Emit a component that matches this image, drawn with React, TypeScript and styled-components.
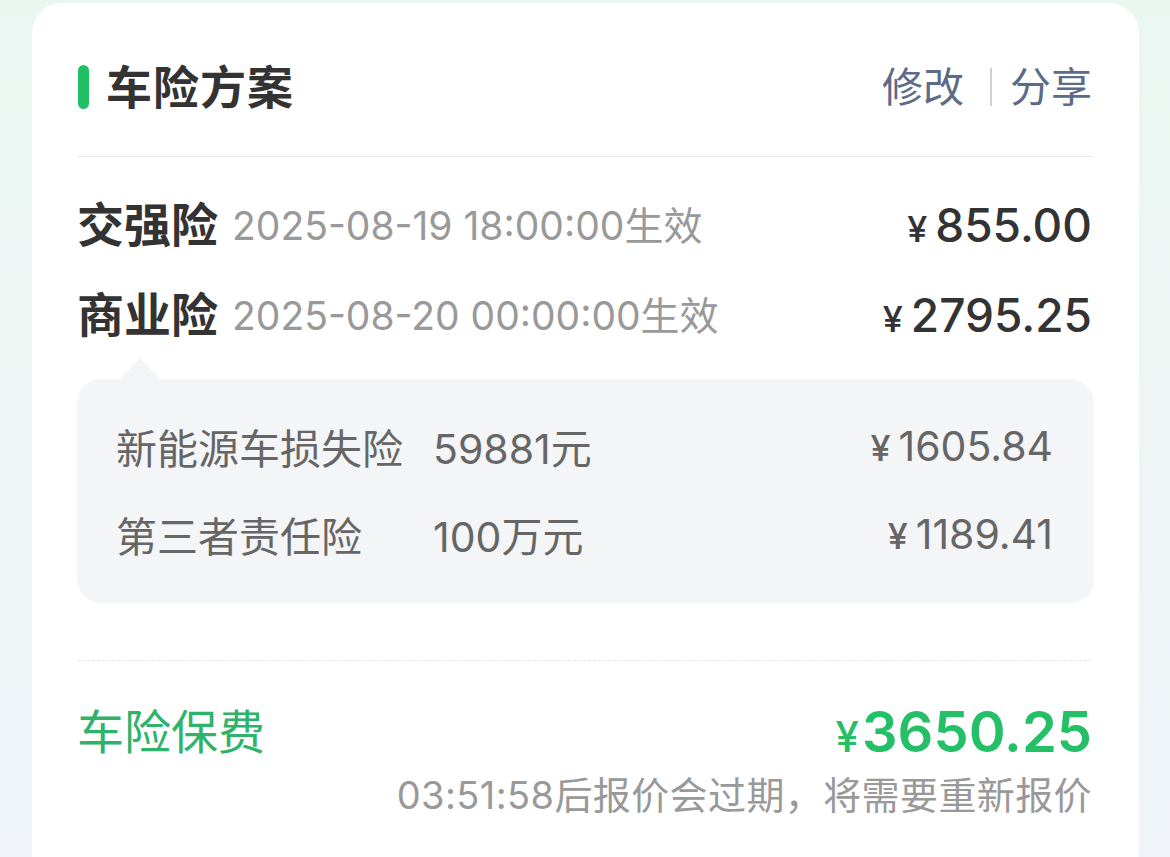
import React from "react";
import styled, { createGlobalStyle } from "styled-components";

const GlobalStyle = createGlobalStyle`
  html, body { margin: 0; padding: 0; }
  body {
    font-family: Inter, "Noto Sans CJK SC", sans-serif;
    background: linear-gradient(180deg, #eaf7f1 0%, #eef5f4 45%, #f0f4fa 100%);
    overflow: hidden;
  }
`;

const Page = styled.div`
  padding: 3px 31px 0 32px;
  height: 857px;
  box-sizing: border-box;
  overflow: hidden;
`;

const Card = styled.div`
  background: #ffffff;
  border-radius: 30px;
  padding: 0 45px 0 45px;
  height: 880px;
  box-sizing: border-box;
`;

const Header = styled.div`
  display: flex;
  align-items: center;
  justify-content: space-between;
  padding-top: 54px;
  height: 60px;
  box-sizing: content-box;
`;

const TitleWrap = styled.div`
  display: flex;
  align-items: center;
  gap: 17px;
`;

const Bar = styled.span`
  display: block;
  width: 11px;
  height: 44px;
  border-radius: 6px;
  background: #22c064;
  margin-left: 1px;
`;

const Title = styled.h1`
  margin: 0;
  font-size: 46px;
  font-weight: 700;
  color: #333333;
  line-height: 60px;
  letter-spacing: 1px;
`;

const Actions = styled.div`
  display: flex;
  align-items: center;
  margin-right: 2px;
`;

const Action = styled.span`
  font-size: 41px;
  color: #5b6b88;
  line-height: 60px;
`;

const Sep = styled.span`
  display: block;
  width: 2px;
  height: 38px;
  background: #d0d0d0;
  margin: 0 18px 0 26px;
`;

const Divider = styled.div<{ $dashed?: boolean }>`
  height: 0;
  margin-right: 2px;
  border-top: 1px ${(p) => (p.$dashed ? "dashed" : "solid")} #e6e6e6;
`;

const TopDivider = styled(Divider)`
  margin-top: 39px;
`;

const Rows = styled.div`
  padding-top: 23px;
  padding-right: 2px;
`;

const Row = styled.div`
  display: flex;
  align-items: center;
  justify-content: space-between;
  height: 90px;
`;

const RowLeft = styled.div`
  display: flex;
  align-items: center;
  gap: 14px;
`;

const RowName = styled.span`
  font-size: 47px;
  font-weight: 700;
  color: #333333;
  line-height: 60px;
`;

const RowDate = styled.span`
  font-size: 39px;
  color: #999999;
  line-height: 60px;
  padding-top: 2px;
`;

const Price = styled.span`
  display: flex;
  align-items: baseline;
  gap: 8px;
  color: #333333;
  font-size: 46px;
  font-weight: 500;
`;

const Yen = styled.span<{ $size: number }>`
  font-size: ${(p) => p.$size}px;
  font-weight: 500;
`;

const SubBox = styled.div`
  position: relative;
  margin-top: 19px;
  background: #f4f5f7;
  border-radius: 24px;
  padding: 23px 41px 25px 39px;
`;

const Pointer = styled.span`
  position: absolute;
  top: -21px;
  left: 43px;
  width: 0;
  height: 0;
  border-left: 20px solid transparent;
  border-right: 20px solid transparent;
  border-bottom: 21px solid #f4f5f7;
`;

const SubRow = styled.div`
  display: grid;
  grid-template-columns: 317px 1fr auto;
  align-items: center;
  height: 88px;
  font-size: 41px;
  color: #666666;
`;

const SubPrice = styled.span`
  display: flex;
  align-items: baseline;
  gap: 8px;
  font-size: 41px;
  color: #666666;
`;

const BottomDivider = styled(Divider)`
  margin-top: 57px;
`;

const TotalRow = styled.div`
  display: flex;
  align-items: center;
  justify-content: space-between;
  height: 72px;
  margin-top: 31px;
  padding-right: 2px;
`;

const TotalLabel = styled.span`
  font-size: 47px;
  color: #2fb36a;
`;

const TotalPrice = styled.span`
  display: flex;
  align-items: baseline;
  gap: 3px;
  color: #24bf66;
  font-size: 56px;
  font-weight: 600;
  padding-top: 8px;
`;

const Note = styled.div`
  text-align: right;
  font-size: 38px;
  letter-spacing: 0.4px;
  color: #999999;
  line-height: 54px;
  margin-top: 4px;
  padding-right: 2px;
`;

const App: React.FC = () => {
  const mains = [
    { name: "交强险", date: "2025-08-19 18:00:00生效", price: "855.00" },
    { name: "商业险", date: "2025-08-20 00:00:00生效", price: "2795.25" },
  ];
  const subs = [
    { name: "新能源车损失险", amount: "59881元", price: "1605.84" },
    { name: "第三者责任险", amount: "100万元", price: "1189.41" },
  ];
  return (
    <>
      <GlobalStyle />
      <Page>
        <Card>
          <Header>
            <TitleWrap>
              <Bar />
              <Title>车险方案</Title>
            </TitleWrap>
            <Actions>
              <Action>修改</Action>
              <Sep />
              <Action>分享</Action>
            </Actions>
          </Header>
          <TopDivider />
          <Rows>
            {mains.map((m) => (
              <Row key={m.name}>
                <RowLeft>
                  <RowName>{m.name}</RowName>
                  <RowDate>{m.date}</RowDate>
                </RowLeft>
                <Price>
                  <Yen $size={36}>¥</Yen>
                  {m.price}
                </Price>
              </Row>
            ))}
          </Rows>
          <SubBox>
            <Pointer />
            {subs.map((s) => (
              <SubRow key={s.name}>
                <span>{s.name}</span>
                <span>{s.amount}</span>
                <SubPrice>
                  <Yen $size={36}>¥</Yen>
                  {s.price}
                </SubPrice>
              </SubRow>
            ))}
          </SubBox>
          <BottomDivider $dashed />
          <TotalRow>
            <TotalLabel>车险保费</TotalLabel>
            <TotalPrice>
              <Yen $size={42}>¥</Yen>
              3650.25
            </TotalPrice>
          </TotalRow>
          <Note>03:51:58后报价会过期，将需要重新报价</Note>
        </Card>
      </Page>
    </>
  );
};

export default App;
